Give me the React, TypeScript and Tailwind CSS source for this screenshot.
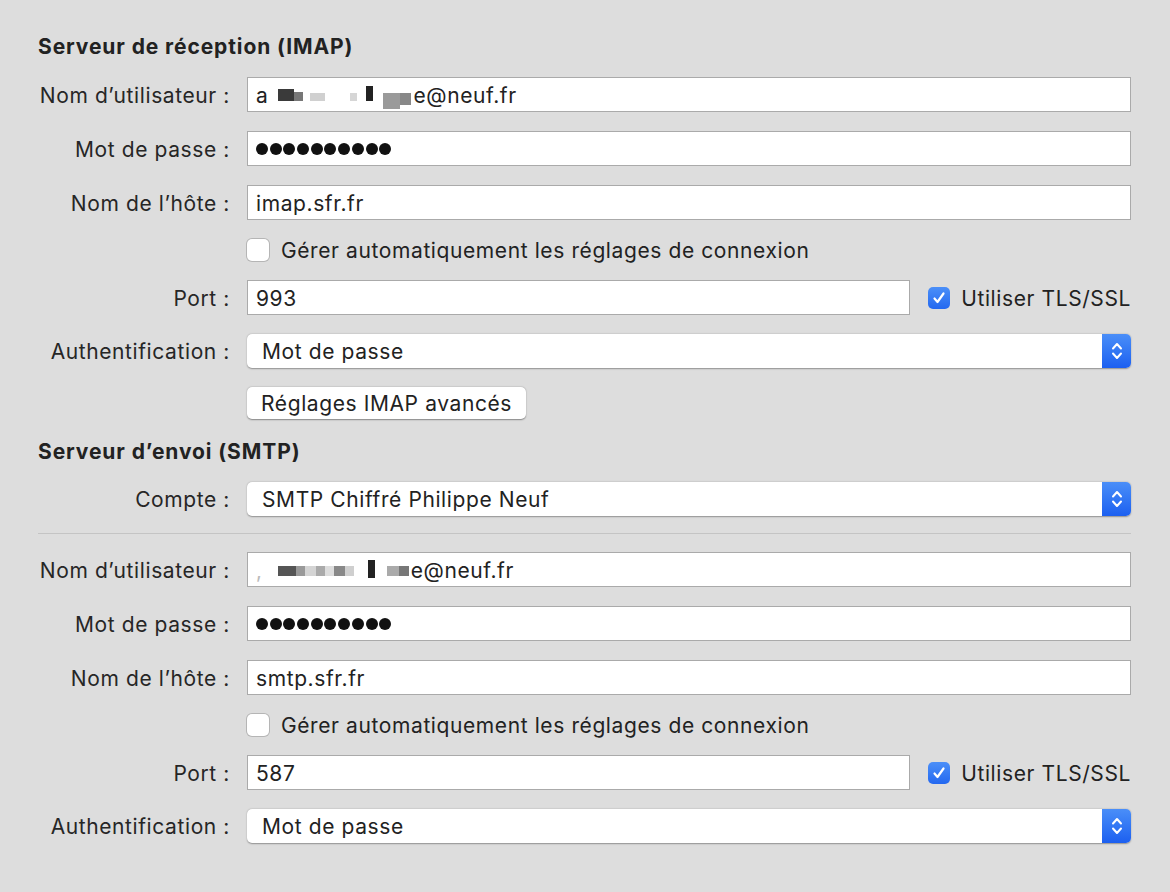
import React from "react";

const font = { fontFamily: "Inter, 'Noto Sans', sans-serif" };

function Label({ children }: { children: React.ReactNode }) {
  return <div className="text-right text-[21px] tracking-[0.6px] text-[#262626] whitespace-nowrap pt-[2px]">{children}</div>;
}

function Field({ children, className = "" }: { children: React.ReactNode; className?: string }) {
  return (
    <div
      className={`h-[35px] bg-white border border-[#aaaaaa] flex items-center pl-[8px] pt-[2px] text-[21px] tracking-[0.6px] text-[#222] ${className}`}
    >
      {children}
    </div>
  );
}

function Stepper() {
  return (
    <div className="w-[29px] h-full rounded-r-[5px] bg-gradient-to-b from-[#4a8ef8] to-[#1c5ff0] flex items-center justify-center">
      <svg width="14" height="22" viewBox="0 0 14 22" fill="none" stroke="white" strokeWidth="2" strokeLinecap="round" strokeLinejoin="round">
        <path d="M3 8.5 L7 4 L11 8.5" />
        <path d="M3 13.5 L7 18 L11 13.5" />
      </svg>
    </div>
  );
}

function Popup({ value }: { value: string }) {
  return (
    <div className="h-[34px] bg-white rounded-[5px] shadow-[0_0.5px_1.5px_rgba(0,0,0,0.35)] flex items-stretch">
      <div className="flex-1 flex items-center pl-[15px] pt-[2px] text-[21px] tracking-[0.6px] text-[#222]">{value}</div>
      <Stepper />
    </div>
  );
}

function Checkbox({ checked }: { checked?: boolean }) {
  if (checked) {
    return (
      <div className="w-[22px] h-[22px] rounded-[5px] bg-gradient-to-b from-[#4b8ff8] to-[#2468f0] flex items-center justify-center shrink-0">
        <svg width="14" height="14" viewBox="0 0 14 14" fill="none" stroke="white" strokeWidth="2.2" strokeLinecap="round" strokeLinejoin="round">
          <path d="M2.5 7.5 L5.5 11 L11.5 2.5" />
        </svg>
      </div>
    );
  }
  return (
    <div className="w-[22px] h-[22px] rounded-[5px] bg-white shadow-[0_0_0_1px_#b5b5b5] shrink-0" />
  );
}

// pixelated, blurred-out part of the address
function Blurred({ variant }: { variant: 1 | 2 }) {
  const blocks1 = [
    { w: 8, h: 0, c: "transparent", y: 0 },
    { w: 16, h: 12, c: "#3a3a3a", y: 0 },
    { w: 9, h: 9, c: "#777", y: 3 },
    { w: 7, h: 0, c: "transparent", y: 0 },
    { w: 15, h: 8, c: "#d0d0d0", y: 4 },
    { w: 25, h: 0, c: "transparent", y: 0 },
    { w: 7, h: 8, c: "#d6d6d6", y: 4 },
    { w: 9, h: 0, c: "transparent", y: 0 },
    { w: 7, h: 15, c: "#222", y: -3 },
    { w: 10, h: 0, c: "transparent", y: 0 },
    { w: 17, h: 16, c: "#9a9a9a", y: 4 },
    { w: 11, h: 12, c: "#888", y: 4 },
  ];
  const blocks2 = [
    { w: 14, h: 0, c: "transparent", y: 0 },
    { w: 18, h: 10, c: "#555", y: 2 },
    { w: 9, h: 10, c: "#999", y: 2 },
    { w: 11, h: 10, c: "#d4d4d4", y: 2 },
    { w: 9, h: 10, c: "#aaa", y: 2 },
    { w: 9, h: 10, c: "#ddd", y: 2 },
    { w: 11, h: 10, c: "#888", y: 2 },
    { w: 9, h: 10, c: "#cfcfcf", y: 2 },
    { w: 14, h: 0, c: "transparent", y: 0 },
    { w: 7, h: 18, c: "#222", y: -4 },
    { w: 12, h: 0, c: "transparent", y: 0 },
    { w: 12, h: 10, c: "#aaa", y: 2 },
    { w: 10, h: 10, c: "#777", y: 2 },
  ];
  const blocks = variant === 1 ? blocks1 : blocks2;
  return (
    <span className="inline-flex items-start h-[14px] mx-[2px]">
      {blocks.map((b, i) => (
        <span
          key={i}
          className="block shrink-0"
          style={{ width: b.w, height: b.h, background: b.c, marginTop: b.y }}
        />
      ))}
    </span>
  );
}

function Dots() {
  return (
    <div className="flex gap-[1.7px] items-center -mt-[2px]">
      {Array.from({ length: 10 }).map((_, i) => (
        <span key={i} className="block w-[12px] h-[12px] rounded-full bg-[#111]" />
      ))}
    </div>
  );
}

function ServerBlock({
  user,
  host,
  port,
}: {
  user: 1 | 2;
  host: string;
  port: string;
}) {
  return (
    <>
      <Label>Nom d’utilisateur :</Label>
      <Field>
        <span className={user === 1 ? "" : "text-[#bbb]"}>{user === 1 ? "a" : "‚"}</span>
        <Blurred variant={user} />
        <span>e@neuf.fr</span>
      </Field>

      <Label>Mot de passe :</Label>
      <Field>
        <Dots />
      </Field>

      <Label>Nom de l’hôte :</Label>
      <Field>{host}</Field>

      <div />
      <div className="flex items-center gap-[12px] h-[22px] text-[21px] tracking-[0.6px] text-[#222]">
        <Checkbox />
        <span className="pt-[2px]">Gérer automatiquement les réglages de connexion</span>
      </div>

      <Label>Port :</Label>
      <div className="flex items-center">
        <Field className="flex-1 h-[34px]">{port}</Field>
        <div className="ml-[18px] flex items-center gap-[11px] text-[21px] tracking-[0.6px] text-[#222]">
          <Checkbox checked />
          <span className="pt-[2px]">Utiliser TLS/SSL</span>
        </div>
      </div>

      <Label>Authentification :</Label>
      <Popup value="Mot de passe" />
    </>
  );
}

export default function App() {
  return (
    <div className="w-[1170px] h-[892px] bg-[#dddddd] overflow-hidden" style={font}>
      <div className="pl-[38px] pr-[39px] pt-[34px]">
        <div className="text-[21px] tracking-[0.9px] font-bold text-[#222] h-[26px] leading-[26px]">Serveur de réception (IMAP)</div>

        <div className="mt-[17px] grid grid-cols-[192px_1fr] gap-x-[17px] gap-y-[19px] items-center">
          <ServerBlock user={1} host="imap.sfr.fr" port="993" />
          <div />
          <div>
            <div className="inline-flex h-[32px] items-center px-[14px] pt-[2px] bg-white rounded-[5px] shadow-[0_0.5px_1.5px_rgba(0,0,0,0.4)] text-[21px] tracking-[0.6px] text-[#222]">
              Réglages IMAP avancés
            </div>
          </div>
        </div>

        <div className="mt-[20px] text-[21px] tracking-[0.9px] font-bold text-[#222] h-[26px] leading-[26px]">Serveur d’envoi (SMTP)</div>

        <div className="mt-[17px] grid grid-cols-[192px_1fr] gap-x-[17px] items-center">
          <Label>Compte :</Label>
          <Popup value="SMTP Chiffré Philippe Neuf" />
        </div>

        <div className="mt-[17px] h-px bg-[#c4c4c4]" />

        <div className="mt-[18px] grid grid-cols-[192px_1fr] gap-x-[17px] gap-y-[19px] items-center">
          <ServerBlock user={2} host="smtp.sfr.fr" port="587" />
        </div>
      </div>
    </div>
  );
}
